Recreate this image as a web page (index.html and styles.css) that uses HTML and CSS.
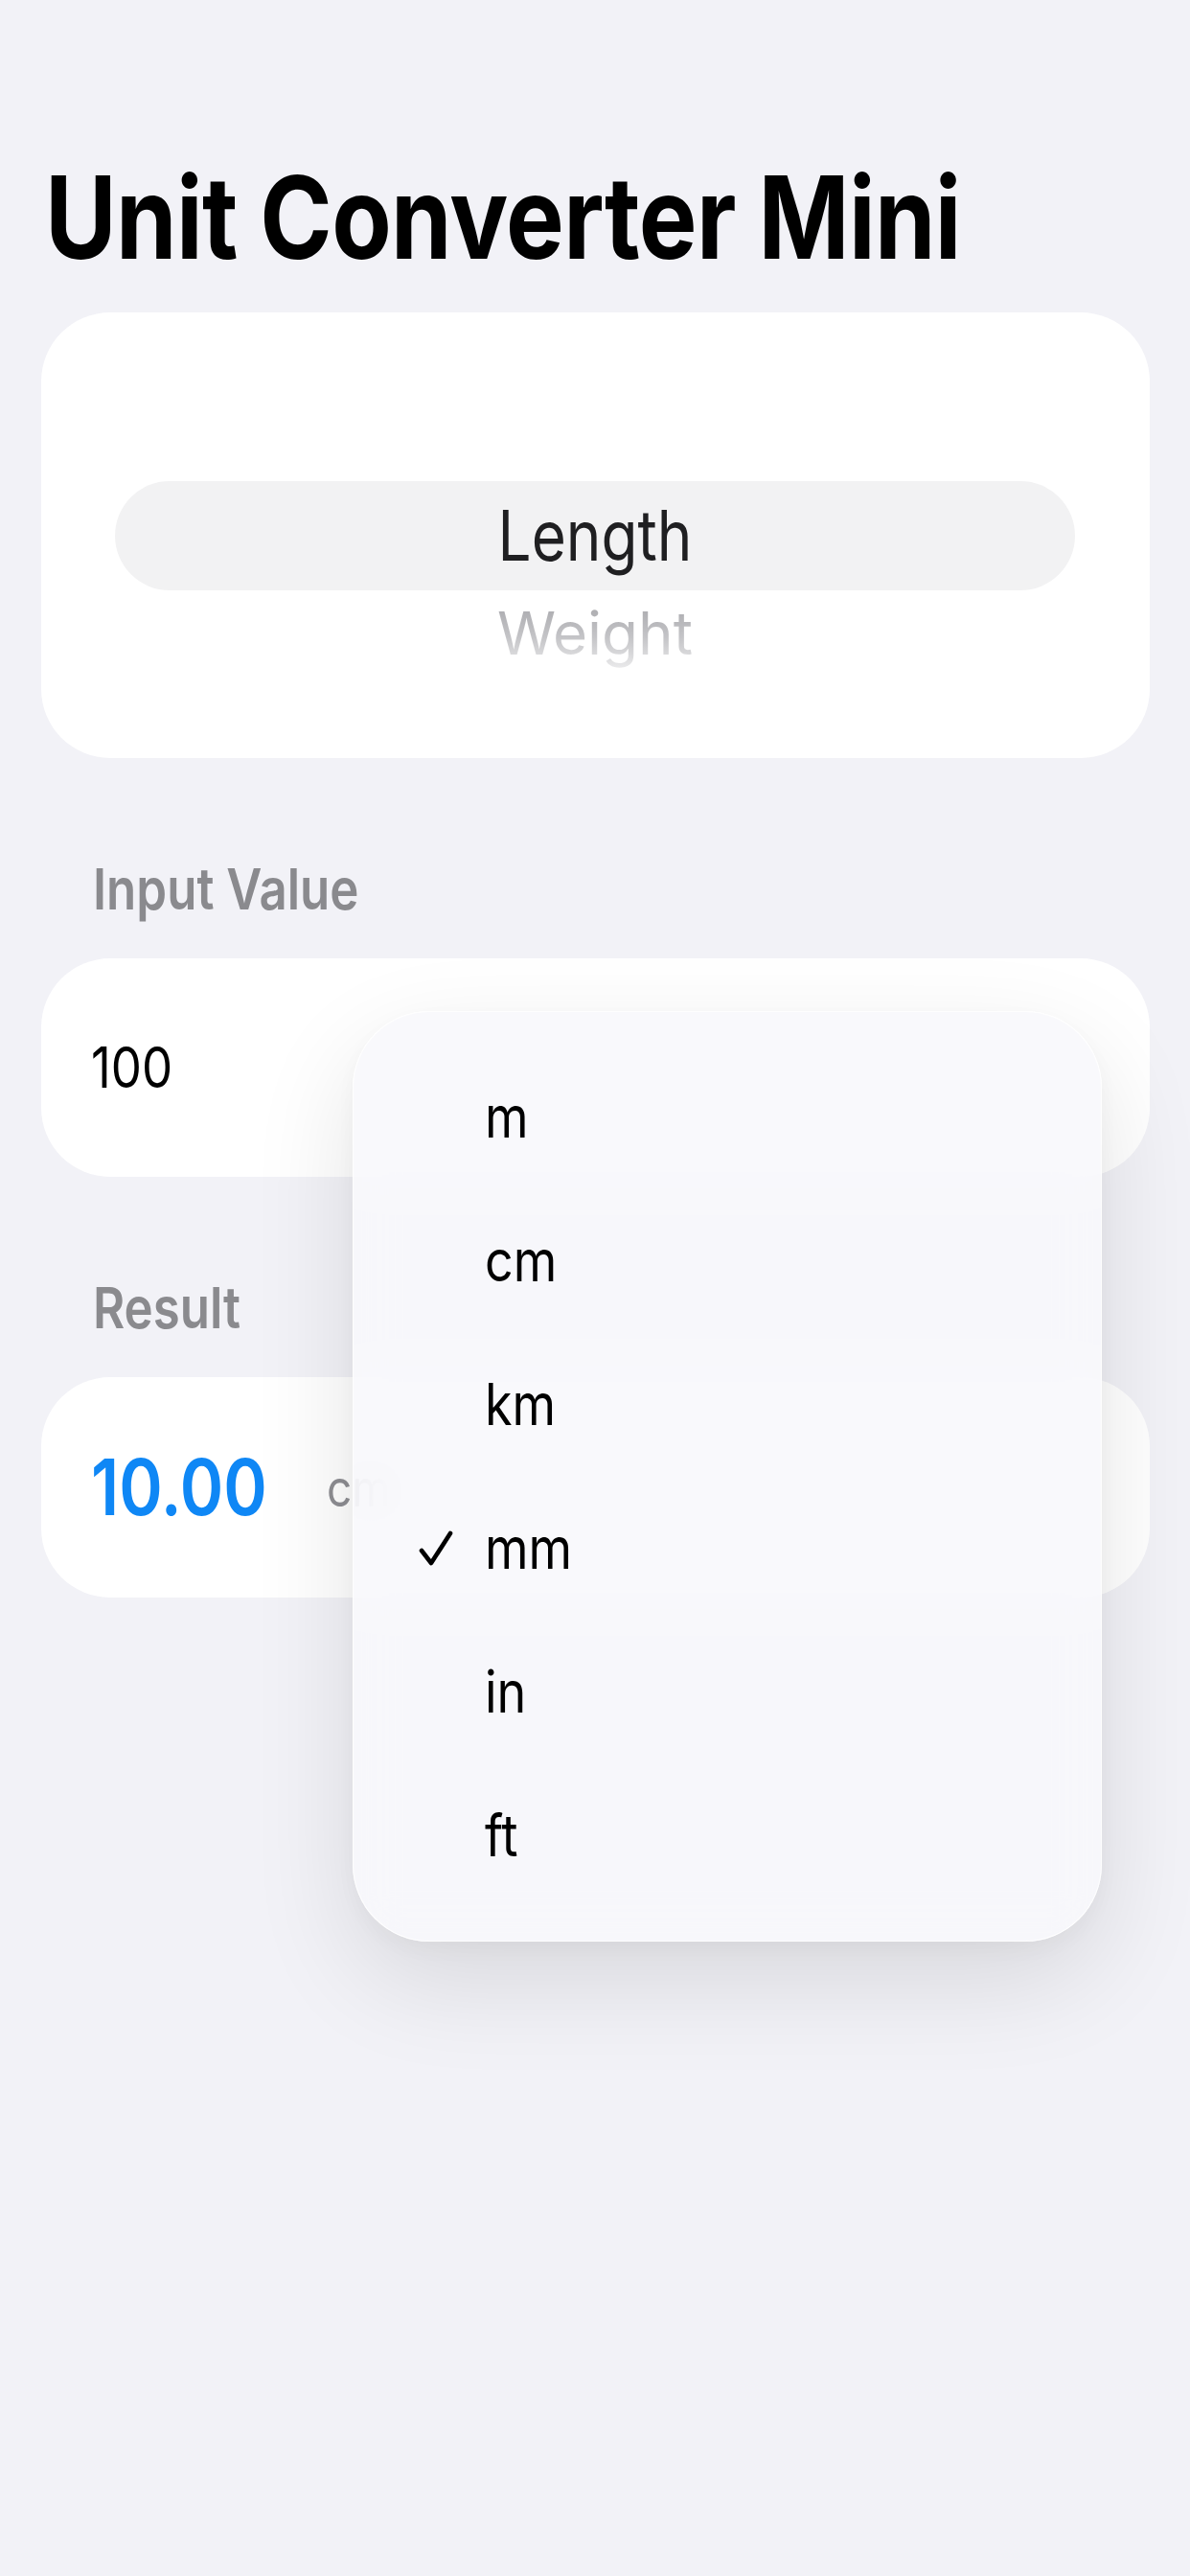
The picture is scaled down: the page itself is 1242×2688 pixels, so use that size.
FILE: index.html
```html
<!DOCTYPE html>
<html lang="en">
<head>
<meta charset="utf-8">
<title>Unit Converter Mini</title>
<link rel="stylesheet" href="styles.css">
</head>
<body>
<main class="screen">
  <h1 class="title"><span class="tx">Unit Converter Mini</span></h1>

  <section class="card picker-card">
    <div class="picker">
      <div class="picker-row picker-row--selected"><span class="tx">Length</span></div>
      <div class="picker-row picker-row--next"><span class="tx fade">Weight</span></div>
    </div>
  </section>

  <h2 class="section-label"><span class="tx">Input Value</span></h2>
  <section class="card value-card">
    <span class="tx input-value">100</span>
  </section>

  <h2 class="section-label"><span class="tx">Result</span></h2>
  <section class="card value-card result-card">
    <span class="tx result-value">10.00</span>
    <span class="tx result-unit">cm</span>
  </section>

  <div class="menu" role="menu">
    <div class="menu-item"><span class="menu-check"></span><span class="tx menu-text">m</span></div>
    <div class="menu-item"><span class="menu-check"></span><span class="tx menu-text">cm</span></div>
    <div class="menu-item"><span class="menu-check"></span><span class="tx menu-text">km</span></div>
    <div class="menu-item is-checked">
      <span class="menu-check">
        <svg viewBox="0 0 36 40" width="36" height="40"><path d="M3 22 L13 35 L33 4" fill="none" stroke="#000" stroke-width="4.6" stroke-linecap="round" stroke-linejoin="round"/></svg>
      </span>
      <span class="tx menu-text">mm</span>
    </div>
    <div class="menu-item"><span class="menu-check"></span><span class="tx menu-text">in</span></div>
    <div class="menu-item"><span class="menu-check"></span><span class="tx menu-text">ft</span></div>
  </div>
</main>
</body>
</html>
```

FILE: styles.css
```css
* { box-sizing: border-box; }

html, body {
  margin: 0;
  padding: 0;
}

body {
  background: #f2f2f7;
  font-family: Inter, "Noto Sans", "Liberation Sans", sans-serif;
  color: #000;
  width: 1242px;
  height: 2688px;
  overflow: hidden;
}

.screen {
  position: relative;
  padding: 167px 42px 0 43px;
  height: 2688px;
}

/* the reference glyphs are taller than they are wide */
.tx {
  display: inline-block;
  transform: scaleY(1.17);
}

.title {
  margin: 0;
  font-size: 102px;
  line-height: 120px;
  font-weight: 700;
  letter-spacing: -0.6px;
  padding-left: 4px;
}

.card {
  background: #ffffff;
  border-radius: 72px;
}

.picker-card {
  margin-top: 39px;
  height: 465px;
  padding: 176px 78px 0 77px;
}

.picker-row {
  display: flex;
  align-items: center;
  justify-content: center;
  font-size: 62px;
  line-height: 80px;
}

.picker-row--selected {
  height: 114px;
  background: #f2f2f3;
  border-radius: 57px;
  color: #1f1f21;
}

.picker-row--next {
  height: 89px;
}

.picker-row--next .tx {
  transform: scaleY(1.0);
}

.fade {
  background: linear-gradient(180deg, #a3a3a7 0%, #c4c4c7 55%, #eeeeef 100%);
  -webkit-background-clip: text;
  background-clip: text;
  color: transparent;
}

.section-label {
  margin: 101px 0 0 0;
  padding-left: 54px;
  font-size: 51px;
  line-height: 72px;
  font-weight: 600;
  color: #8a8a8e;
}

.value-card {
  margin-top: 36px;
  height: 228px;
  display: flex;
  align-items: center;
  padding-left: 52px;
}

.result-card {
  height: 230px;
  gap: 62px;
}

.input-value {
  font-size: 51px;
  line-height: 70px;
}

.result-value {
  font-size: 69px;
  line-height: 90px;
  font-weight: 600;
  color: #0f87f5;
}

.result-unit {
  font-size: 46px;
  line-height: 64px;
  color: #8e8e93;
}

.menu {
  position: absolute;
  left: 368px;
  top: 1055px;
  width: 782px;
  height: 971px;
  padding: 35px 0 0 0;
  border-radius: 80px;
  background: rgba(248, 248, 251, 0.86);
  -webkit-backdrop-filter: blur(24px);
  backdrop-filter: blur(24px);
  border: 1.5px solid rgba(255, 255, 255, 0.9);
  box-shadow: 0 40px 110px rgba(0, 0, 0, 0.11), 0 8px 30px rgba(0, 0, 0, 0.04);
}

.menu-item {
  height: 150px;
  display: flex;
  align-items: center;
  padding-left: 68px;
  font-size: 52px;
  line-height: 70px;
  color: #000;
}

.menu-check {
  width: 69px;
  height: 40px;
  display: flex;
  align-items: center;
}

.menu-check svg {
  display: block;
}
```
